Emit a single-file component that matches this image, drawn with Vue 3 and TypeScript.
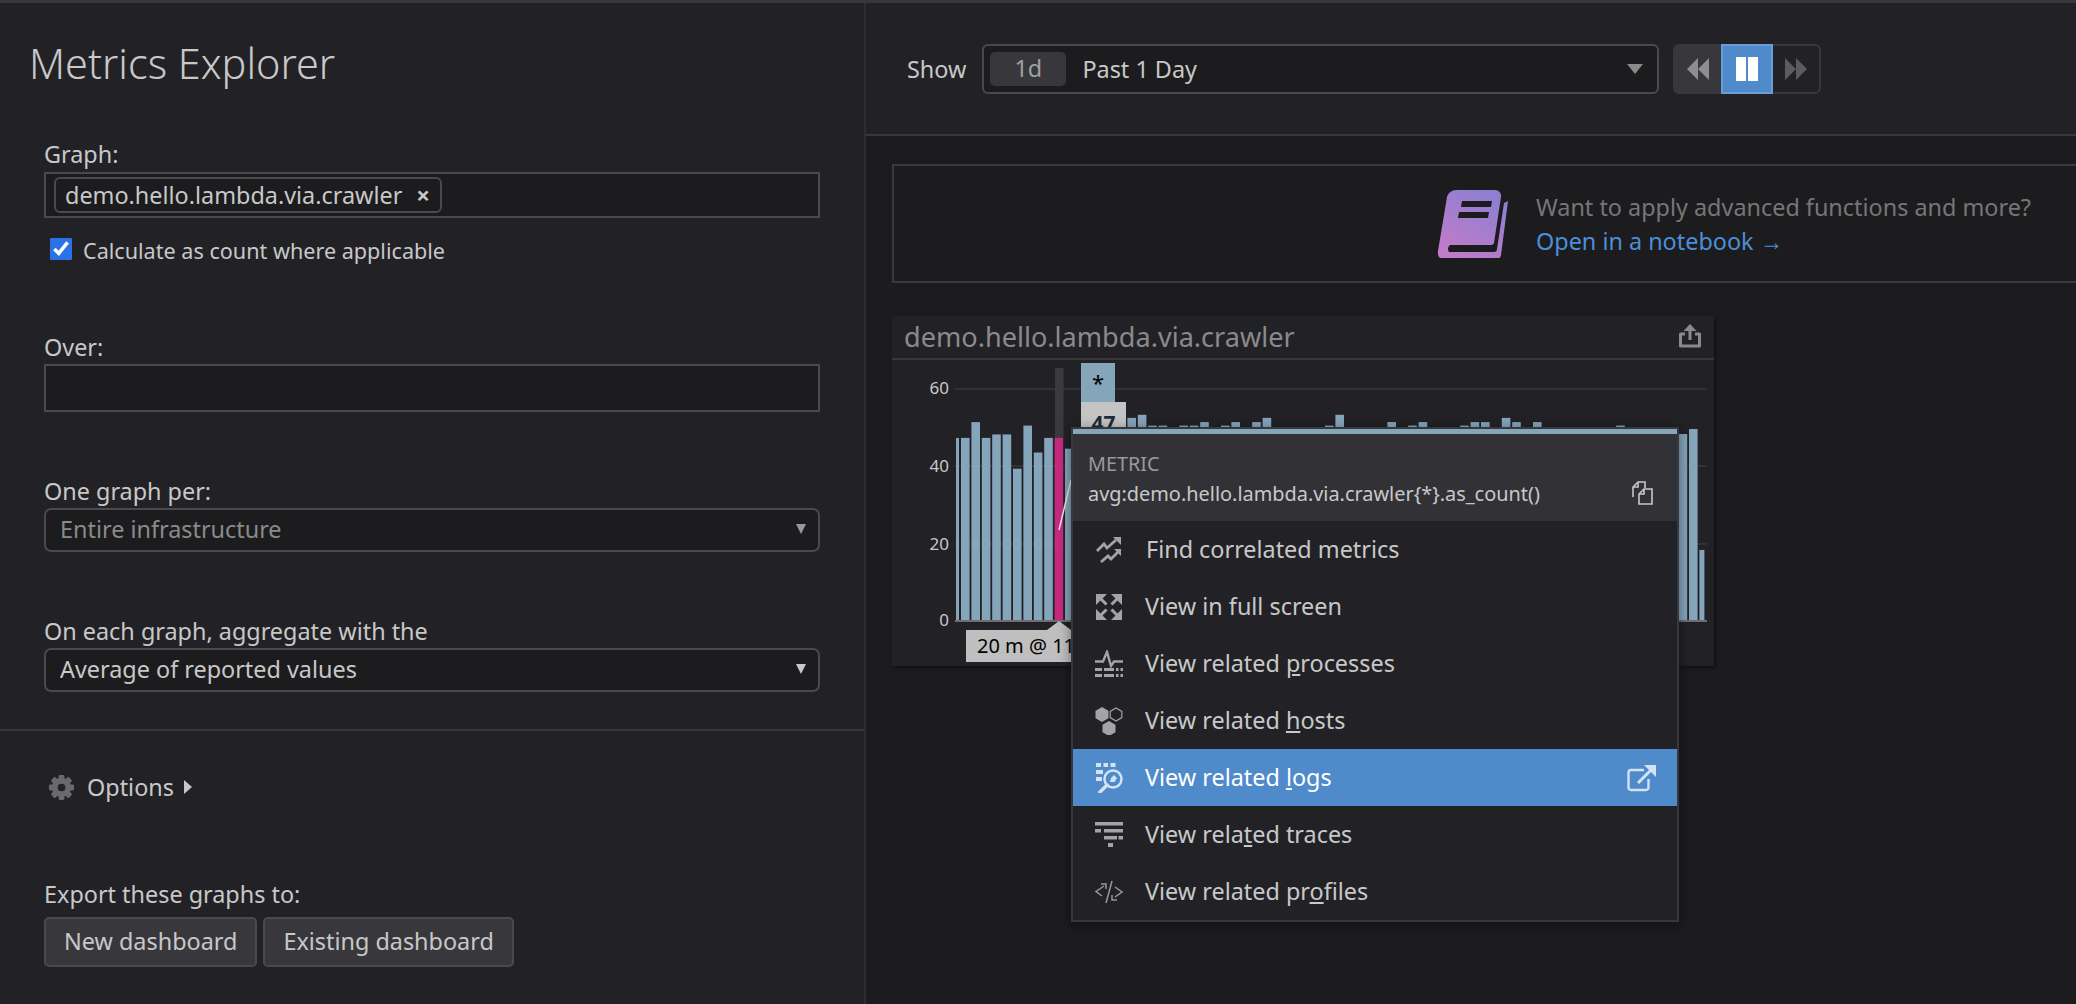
<template>
  <div class="page">
    <aside class="side">
      <h1>Metrics Explorer</h1>

      <div class="field graph-field">
        <label>Graph:</label>
        <div class="box tags">
          <span class="chip">demo.hello.lambda.via.crawler <b>×</b></span>
        </div>
        <label class="check">
          <input type="checkbox" checked />
          <span>Calculate as count where applicable</span>
        </label>
      </div>

      <div class="field over-field">
        <label>Over:</label>
        <input class="box over-input" type="text" />
      </div>

      <div class="field per-field">
        <label>One graph per:</label>
        <div class="select muted">
          <span>Entire infrastructure</span>
          <svg width="12" height="12" viewBox="0 0 12 12"><path d="M1 1h10l-5 10z" fill="#999" /></svg>
        </div>
      </div>

      <div class="field agg-field">
        <label>On each graph, aggregate with the</label>
        <div class="select">
          <span>Average of reported values</span>
          <svg width="12" height="12" viewBox="0 0 12 12"><path d="M1 1h10l-5 10z" fill="#c8c8c8" /></svg>
        </div>
      </div>

      <hr class="side-line" />

      <div class="options">
        <svg class="gear" width="27" height="27" viewBox="0 0 28 28">
          <rect v-for="a in gearTeeth" :key="a" x="11" y="1" width="6" height="26" rx="1.5" fill="#6a6a6e" :transform="`rotate(${a} 14 14)`" />
          <circle cx="14" cy="14" r="10" fill="#6a6a6e" />
          <circle cx="14" cy="14" r="4" fill="#222226" />
        </svg>
        <span>Options</span>
        <svg width="9" height="14" viewBox="0 0 9 14"><path d="M1 0l8 7-8 7z" fill="#c8c8c8" /></svg>
      </div>

      <div class="field export-field">
        <label>Export these graphs to:</label>
        <div class="export-btns">
          <button>New dashboard</button>
          <button>Existing dashboard</button>
        </div>
      </div>
    </aside>

    <main class="content">
      <header class="time-bar">
        <span class="show">Show</span>
        <div class="time-select">
          <span class="time-chip">1d</span>
          <span class="time-text">Past 1 Day</span>
          <svg width="16" height="12" viewBox="0 0 16 12"><path d="M0 1h16l-8 10z" fill="#8a8a8a" /></svg>
        </div>
        <div class="player">
          <span class="pl back">
            <svg width="24" height="24" viewBox="0 0 24 24"><path d="M12 1v22L1 12zM23 1v22L12 12z" fill="#8e8e90" /></svg>
          </span>
          <span class="pl pause">
            <svg width="24" height="24" viewBox="0 0 24 24"><path d="M1 0h10v24H1zM13 0h10v24H13z" fill="#fff" /></svg>
          </span>
          <span class="pl fwd">
            <svg width="24" height="24" viewBox="0 0 24 24"><path d="M1 1v22l11-11zM12 1v22l11-11z" fill="#5c5c60" /></svg>
          </span>
        </div>
      </header>

      <div class="body">
        <section class="banner">
          <svg class="book" width="72" height="68" viewBox="0 0 72 68">
            <defs>
              <linearGradient id="bookGrad" x1="0.8" y1="0" x2="0.2" y2="1">
                <stop offset="0" stop-color="#8a7fd2" />
                <stop offset="1" stop-color="#c47bc9" />
              </linearGradient>
            </defs>
            <path fill="url(#bookGrad)" d="M19 0h39a6 6 0 0 1 6 7l-7 46a3 3 0 0 1-3 2H13a5 5 0 0 0-1 7h45c2 0 3-1 3-3l7-46 4-2-7 54c-.5 3-3 5-6 5H9c-5 0-9-3-8-9l9-54c1-4 5-7 9-7z" />
            <path fill="#1c1c1e" d="M25 11h30l-1 6H24zM22 22h30l-1 6H21z" />
          </svg>
          <div class="banner-text">
            <div class="want">Want to apply advanced functions and more?</div>
            <a class="open">Open in a notebook →</a>
          </div>
        </section>

        <section class="widget">
          <div class="widget-head">
            <span>demo.hello.lambda.via.crawler</span>
            <svg width="24" height="24" viewBox="0 0 24 24" fill="none" stroke="#8a8a8a" stroke-width="3">
              <path d="M7 10H2.500v12h19V10H17" stroke-linejoin="round" />
              <path d="M12 16V3" />
              <path d="M12 0l6.500 7h-13z" fill="#8a8a8a" stroke="none" />
            </svg>
          </div>

          <svg class="chart" width="822" height="306" viewBox="0 0 822 306">
            <g v-for="y in gridLines" :key="y">
              <line x1="63" x2="815" :y1="y" :y2="y" stroke="#38383c" stroke-width="1.500" />
            </g>
            <text v-for="t in axisLabels" :key="t.label" x="57" :y="t.y" class="axis" text-anchor="end">{{ t.label }}</text>
            <rect x="163" y="8" width="8.600" height="70" fill="#3a3a3e" />
            <rect x="64" y="78" width="3" height="182" fill="#85a5bb" />
            <rect
              v-for="bar in bars"
              :key="bar.i"
              :x="bar.x"
              :y="bar.y"
              :width="bar.w"
              :height="bar.h"
              :fill="bar.i === 9 ? '#c62a80' : '#85a5bb'"
            />
            <line x1="167" y1="170" x2="179" y2="120" stroke="#e8e8e8" stroke-width="1.500" />
            <line x1="63" x2="815" y1="261" y2="261" stroke="#6e6e72" stroke-width="2" />
            <path d="M167 261l12 9h-24z" fill="#bfbfbf" />
          </svg>

          <div class="star-tag">*</div>
          <div class="value-tag">47</div>
          <div class="time-tag">20 m @ 11:00</div>

          <div class="popover">
            <div class="pop-head">
              <div class="pop-kicker">METRIC</div>
              <div class="pop-query">
                <span>avg:demo.hello.lambda.via.crawler{*}.as_count()</span>
                <svg width="24" height="24" viewBox="0 0 24 24" fill="none" stroke="#c8c8c8" stroke-width="1.600">
                  <path d="M3 16V6l5-5h7v6" />
                  <path d="M8 1v5H3" />
                  <path d="M9 18v5h13V8h-8l-5 5z" />
                  <path d="M9 13h5V8" />
                </svg>
              </div>
            </div>
            <ul class="menu">
              <li v-for="item in menuItems" :key="item.id" :class="{ active: item.id === 'logs', first: item.id === 'corr' }">
                <span class="ico">
                  <svg v-if="item.id === 'corr'" width="28" height="28" viewBox="0 0 28 28" fill="none" stroke="#a4a4a4" stroke-width="2.800">
                    <path d="M2 15l7-7 3 4 9-8" />
                    <path d="M18 1h8v8z" fill="#a4a4a4" stroke="none" />
                    <path d="M6 26l7-6 3 3 7-7" />
                    <path d="M19 13h7v7z" fill="#a4a4a4" stroke="none" />
                  </svg>
                  <svg v-else-if="item.id === 'full'" width="26" height="26" viewBox="0 0 26 26" fill="#a4a4a4">
                    <g v-for="r in [0, 90, 180, 270]" :key="r" :transform="`rotate(${r} 13 13)`">
                      <path d="M0 0h11L0 11z" />
                      <path d="M5 5l5.500 5.500" stroke="#a4a4a4" stroke-width="3" />
                    </g>
                  </svg>
                  <svg v-else-if="item.id === 'proc'" width="28" height="28" viewBox="0 0 28 28" fill="#a4a4a4">
                    <path d="M0 11.500h8L12 2l4 14 3-4.500h9" fill="none" stroke="#a4a4a4" stroke-width="2.400" />
                    <path d="M0 18h7v3H0zM9 18h10v3H9zM21 18h2.500v3H21zM25.500 18H28v3h-2.500zM0 24h7v3H0zM9 24h10v3H9zM21 24h2.500v3H21zM25.500 24H28v3h-2.500z" />
                  </svg>
                  <svg v-else-if="item.id === 'hosts'" width="28" height="28" viewBox="0 0 28 28">
                    <path d="M7 0l6.500 3.800v7.400L7 15 .5 11.200V3.800z" fill="#a4a4a4" />
                    <path d="M21 1l5.800 3.400v6.200L21 14l-5.800-3.400V4.400z" fill="none" stroke="#a4a4a4" stroke-width="1.200" />
                    <path d="M14 14l6.500 3.800v7.400L14 29l-6.500-3.800v-7.400z" fill="#a4a4a4" />
                  </svg>
                  <svg v-else-if="item.id === 'logs'" width="28" height="30" viewBox="0 0 28 30" fill="#d3e2f4">
                    <path d="M1 0h5v4H1zM8.500 0H13v4H8.500zM15.500 0h5v4h-5zM1 7h7v4H1zM1 14h6v4H1z" />
                    <circle cx="18" cy="16" r="8.500" fill="none" stroke="#d3e2f4" stroke-width="2.500" />
                    <path d="M19 12l3 3-2.500 4H15l1-4z" />
                    <path d="M12 22l-7 7" stroke="#d3e2f4" stroke-width="3.500" stroke-linecap="round" />
                  </svg>
                  <svg v-else-if="item.id === 'traces'" width="28" height="26" viewBox="0 0 28 26" fill="#a4a4a4">
                    <path d="M0 0h28v3.500H0zM0 7h6v3.500H0zM9 7h19v3.500H9zM9 14h13v3.500H9zM23.500 14H28v3.500h-4.500zM13 21h5v4h-5z" />
                  </svg>
                  <svg v-else width="28" height="24" viewBox="0 0 28 24" fill="none" stroke="#979797" stroke-width="1.500">
                    <path d="M9 6L1 11.500 7 16" />
                    <path d="M6 4h5v5" />
                    <path d="M17 1L11 23" />
                    <path d="M20 7l7 5-7 5" />
                    <path d="M22 20h-5v-5" />
                  </svg>
                </span>
                <span class="label">{{ item.before }}<u v-if="item.key">{{ item.key }}</u>{{ item.after }}</span>
                <svg v-if="item.id === 'logs'" class="ext" width="30" height="28" viewBox="0 0 30 28" fill="none" stroke="#d3e2f4" stroke-width="2.400">
                  <path d="M17 6H4a2.500 2.500 0 0 0-2.500 2.500v15A2.500 2.500 0 0 0 4 26h15a2.500 2.500 0 0 0 2.500-2.500V15" />
                  <path d="M11 19L24 6" stroke-width="3" />
                  <path d="M17 1h12v12z" fill="#d3e2f4" stroke="none" />
                </svg>
              </li>
            </ul>
          </div>
        </section>
      </div>
    </main>
  </div>
</template>

<script setup lang="ts">
interface MenuItem {
  id: string
  before: string
  key?: string
  after?: string
}

const gearTeeth = [0, 45, 90, 135]
const gridLines = [29, 106, 184]
const axisLabels = [
  { label: '60', y: 34 },
  { label: '40', y: 112 },
  { label: '20', y: 190 },
  { label: '0', y: 266 }
]

// avg per 20 minutes; the ones in the middle are mostly under the popover anyway
const values = [
  47.3, 51.4, 47.3, 48.2, 48.2, 39.3, 50.5, 43.5, 47.3, 47.3, 44.5, 48, 48, 48, 48, 48,
  52.5, 53.3, 50.5, 50.5, 48, 50.5, 50.5, 51.4, 48, 50.5, 51.4, 48, 51.4, 52.5, 47, 48,
  48, 47, 48, 50.5, 53.3, 48, 47, 48, 47, 51.4, 48, 50.5, 51.4, 48, 47, 48, 50.5, 51.4,
  51.4, 48, 52.5, 51.4, 48, 51.4, 48, 47, 48, 48, 47, 48, 48, 50.5, 48, 47, 48, 47, 48,
  48.3, 49.6, 18.2
]

const bars = values.map((v, i) => {
  const h = v * 3.85
  return {
    i,
    x: 69 + 10.4 * i,
    y: 260 - h,
    w: i === values.length - 1 ? 5 : 8.6,
    h
  }
})

const menuItems: MenuItem[] = [
  { id: 'corr', before: 'Find correlated metrics' },
  { id: 'full', before: 'View in full screen' },
  { id: 'proc', before: 'View related ', key: 'p', after: 'rocesses' },
  { id: 'hosts', before: 'View related ', key: 'h', after: 'osts' },
  { id: 'logs', before: 'View related ', key: 'l', after: 'ogs' },
  { id: 'traces', before: 'View rela', key: 't', after: 'ed traces' },
  { id: 'profiles', before: 'View related pr', key: 'o', after: 'files' }
]
</script>

<style>
html,
body {
  background: #1c1c1e;
}
</style>

<style scoped>
.page {
  display: flex;
  width: 2076px;
  height: 1004px;
  overflow: hidden;
  border-top: 3px solid #38383c;
  box-sizing: border-box;
  background: #1c1c1e;
  color: #c8c8c8;
  font-family: "Noto Sans", "Open Sans", sans-serif;
  font-size: 23.400px;
}

.side {
  width: 864px;
  flex-shrink: 0;
  background: #222226;
  border-right: 2px solid #2e2e32;
}

h1 {
  margin: 32px 0 0 29px;
  font-size: 41.400px;
  line-height: 56px;
  font-weight: 300;
  color: #c8c8c8;
}

.field {
  margin-left: 44px;
  width: 776px;
}

.field > label {
  display: block;
  height: 26px;
  line-height: 24px;
  margin-bottom: 3px;
}

.graph-field {
  margin-top: 51px;
}

.graph-field > label:first-child {
  margin-bottom: 4px;
}

.box {
  display: block;
  width: 100%;
  box-sizing: border-box;
  background: #1c1c1e;
  border: 2px solid #4a4a4e;
  outline: none;
}

.tags {
  display: flex;
  align-items: center;
  height: 46px;
  padding-left: 8px;
}

.chip {
  display: inline-flex;
  align-items: center;
  gap: 14px;
  height: 36px;
  padding: 0 10px 0 9px;
  box-sizing: border-box;
  border: 2px solid #4a4a4e;
  border-radius: 6px;
  white-space: nowrap;
}

.chip b {
  font-size: 24px;
  line-height: 1;
}

.field > label.check {
  display: flex;
  align-items: center;
  gap: 11px;
  margin: 20px 0 0 6px;
  height: 22px;
  line-height: 22px;
  font-size: 21.600px;
}

.check span {
  padding-top: 4px;
}

.check input {
  width: 22px;
  height: 22px;
  margin: 0;
  accent-color: #2a72e5;
}

.over-field {
  margin-top: 75px;
}

.over-input {
  height: 48px;
}

.per-field {
  margin-top: 67px;
}

.agg-field {
  margin-top: 67px;
}

.select {
  display: flex;
  align-items: center;
  justify-content: space-between;
  height: 44px;
  padding: 0 11px 3px 14px;
  box-sizing: border-box;
  background: #1c1c1e;
  border: 2px solid #4a4a4e;
  border-radius: 7px;
}

.select.muted {
  color: #8a8a8a;
}

.side-line {
  height: 2px;
  margin: 37px 0 0;
  border: 0;
  background: #38383c;
}

.options {
  display: flex;
  align-items: center;
  height: 30px;
  margin: 41px 0 0 48px;
}

.options span {
  margin: 0 9px 0 12px;
}

.export-field {
  margin-top: 80px;
}

.field.export-field > label {
  margin-bottom: 9px;
}

.export-btns {
  display: flex;
  gap: 6px;
}

.export-btns button {
  height: 50px;
  padding: 0 18px 3px;
  background: #38383c;
  color: #c8c8c8;
  border: 2px solid #4a4a4e;
  border-radius: 5px;
  font: inherit;
}

.content {
  flex: 1;
  min-width: 0;
}

.time-bar {
  display: flex;
  align-items: center;
  height: 133px;
  padding: 1px 0 0 41px;
  box-sizing: border-box;
  background: #222226;
  border-bottom: 2px solid #38383c;
}

.show {
  margin-right: 16px;
}

.time-select {
  display: flex;
  align-items: center;
  width: 677px;
  height: 50px;
  padding: 0 14px 0 6px;
  box-sizing: border-box;
  background: #1c1c1e;
  border: 2px solid #4a4a4e;
  border-radius: 6px;
}

.time-chip {
  width: 76px;
  height: 34px;
  line-height: 32px;
  text-align: center;
  background: #38383c;
  border-radius: 5px;
  color: #a0a0a0;
}

.time-text {
  flex: 1;
  margin-left: 16px;
}

.player {
  display: flex;
  height: 50px;
  margin-left: 14px;
  box-sizing: border-box;
  border: 2px solid #38383c;
  border-radius: 6px;
}

.pl {
  display: flex;
  align-items: center;
  justify-content: center;
}

.back {
  width: 46px;
  background: #38383c;
}

.pause {
  width: 52px;
  margin: -2px 0;
  background: #4f8acb;
  border: 2px solid #6a9cd6;
  box-sizing: border-box;
}

.fwd {
  width: 46px;
}

.body {
  padding: 28px 0 0 26px;
}

.banner {
  display: flex;
  align-items: center;
  gap: 27px;
  height: 119px;
  margin-right: -4px;
  padding-left: 543px;
  box-sizing: border-box;
  border: 2px solid #3a3a3e;
}

.want {
  line-height: 34px;
  color: #767678;
}

.open {
  line-height: 34px;
  color: #4d8ed8;
}

.widget {
  position: relative;
  width: 822px;
  height: 350px;
  margin-top: 33px;
  background: #222226;
  box-shadow: 2px 2px 3px rgba(0, 0, 0, 0.35);
}

.widget-head {
  display: flex;
  align-items: center;
  justify-content: space-between;
  height: 44px;
  padding: 0 12px 2px;
  box-sizing: border-box;
  border-bottom: 2px solid #38383c;
  color: #8a8a8a;
  font-size: 27.100px;
}

.chart {
  display: block;
}

.axis {
  fill: #c8c8c8;
  font-size: 17px;
}

.star-tag {
  position: absolute;
  left: 189px;
  top: 47px;
  width: 34px;
  height: 39px;
  line-height: 38px;
  background: #85a5bb;
  color: #000;
  text-align: center;
  font-size: 22px;
}

.value-tag {
  position: absolute;
  left: 189px;
  top: 86px;
  width: 45px;
  height: 30px;
  padding-top: 8px;
  box-sizing: border-box;
  background: #c4c4c4;
  color: #1e2b38;
  font-weight: 700;
  font-size: 21px;
  line-height: 26px;
  text-align: center;
}

.time-tag {
  position: absolute;
  left: 74px;
  top: 314px;
  width: 190px;
  height: 32px;
  padding-left: 11px;
  box-sizing: border-box;
  background: #bfbfbf;
  color: #000;
  font-size: 20px;
  line-height: 32px;
  white-space: nowrap;
}

.popover {
  position: absolute;
  left: 179px;
  top: 111px;
  width: 608px;
  height: 495px;
  box-sizing: border-box;
  background: #222226;
  border: 2px solid #38383c;
  box-shadow: 0 3px 12px rgba(0, 0, 0, 0.45);
}

.pop-head {
  height: 92px;
  padding: 17px 15px 0;
  box-sizing: border-box;
  background: #323236;
  border-top: 5px solid #85a5bb;
}

.pop-kicker {
  height: 26px;
  line-height: 26px;
  font-size: 19.800px;
  color: #9a9a9c;
}

.pop-query {
  display: flex;
  align-items: center;
  justify-content: space-between;
  height: 30px;
  margin-top: 1px;
  padding-right: 8px;
  font-size: 19.900px;
}

.menu {
  margin: 0;
  padding: 0;
  list-style: none;
}

.menu li {
  display: flex;
  align-items: center;
  height: 57px;
  padding-left: 22px;
  font-size: 23.400px;
  color: #c8c8c8;
}

.menu li .label {
  padding-bottom: 2px;
}

.menu li.first .label {
  margin-left: 1px;
}

.menu li.active {
  background: #4f8acb;
  color: #fff;
}

.ico {
  display: flex;
  align-items: center;
  justify-content: center;
  width: 28px;
  margin-right: 22px;
}

.label {
  flex: 1;
}

.ext {
  margin-right: 20px;
}
</style>
